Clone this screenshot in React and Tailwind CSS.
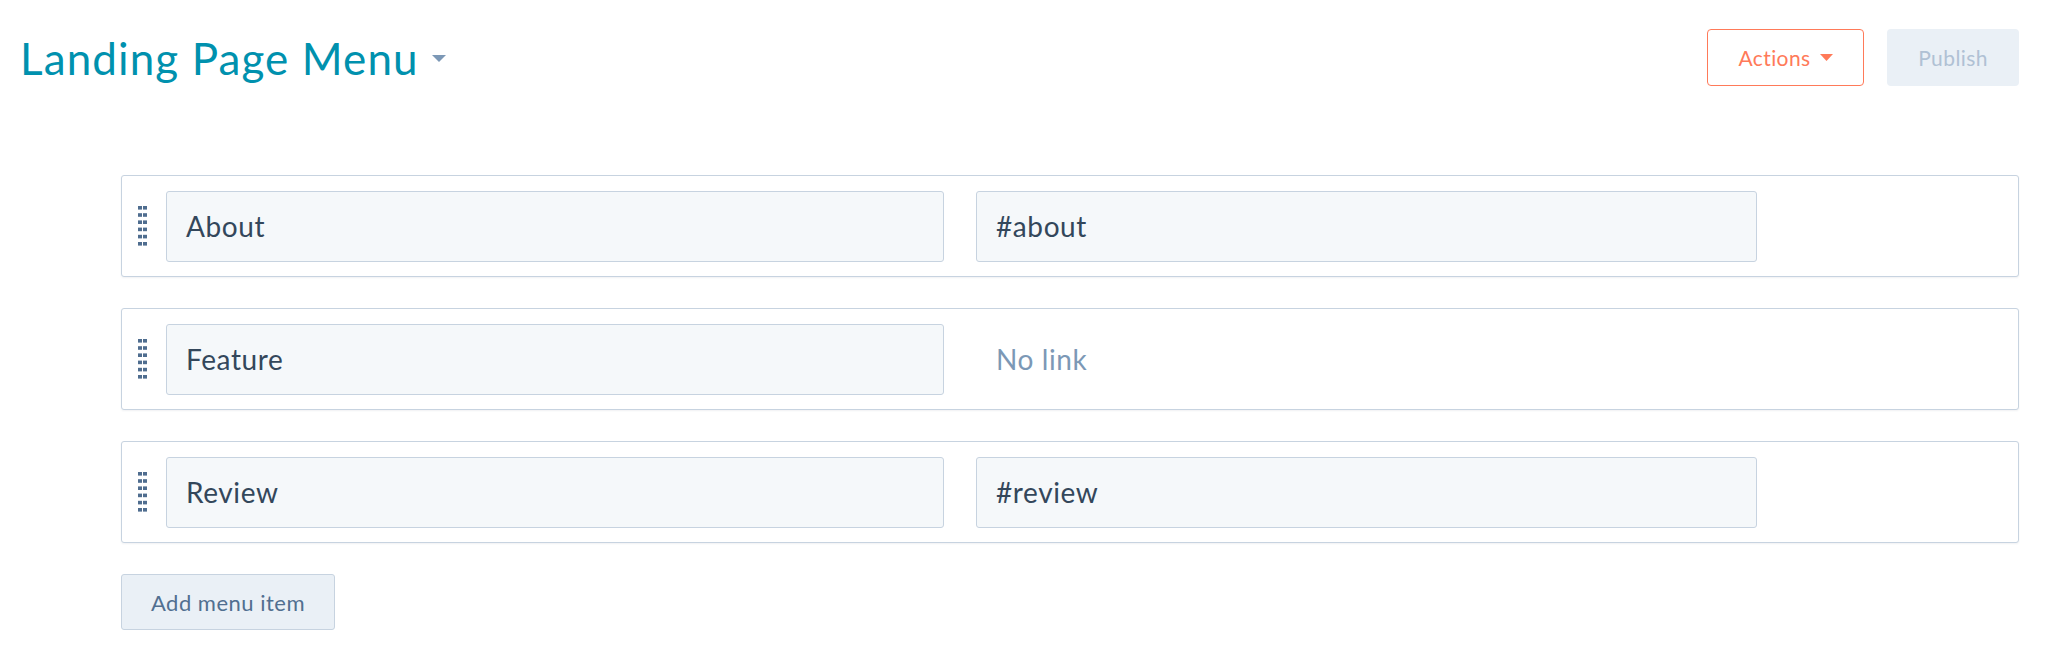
import React from 'react';

const items = [
  { label: 'About', link: '#about' },
  { label: 'Feature', link: null },
  { label: 'Review', link: '#review' },
];

// six rows of paired dots, the drag grip
const DragHandle = () => (
  <svg width="9" height="40" viewBox="0 0 9 40" className="shrink-0">
    {[0, 7.2, 14.4, 21.6, 28.8, 36].map((y) => (
      <g key={y} fill="#4f6d8f">
        <rect x="0" y={y} width="4" height="3.6" />
        <rect x="5" y={y} width="4" height="3.6" />
      </g>
    ))}
  </svg>
);

const Caret = ({ w, h, color }) => (
  <svg width={w} height={h} viewBox={`0 0 ${w} ${h}`}>
    <path d={`M0 0 L${w} 0 L${w / 2} ${h} Z`} fill={color} />
  </svg>
);

const MenuRow = ({ label, link }) => (
  <div className="flex h-[102px] items-center rounded-[3px] border border-[#c7d3e0] bg-white pl-[16px] shadow-[0_1px_2px_rgba(45,62,80,0.07)]">
    <DragHandle />
    <div className="ml-[19px] flex h-[71px] w-[778px] items-center rounded-[3px] border border-[#c7d3e0] bg-[#f5f8fa] px-[19px] text-[28px] tracking-[0.6px] text-[#33475b]">
      {label}
    </div>
    {link ? (
      <div className="ml-[32px] flex h-[71px] w-[781px] items-center rounded-[3px] border border-[#c7d3e0] bg-[#f5f8fa] px-[19px] text-[28px] tracking-[0.6px] text-[#33475b]">
        {link}
      </div>
    ) : (
      <div className="ml-[32px] flex h-[71px] w-[781px] items-center px-[20px] text-[28px] tracking-[0.6px] text-[#7c98b6]">
        No link
      </div>
    )}
  </div>
);

export default function App() {
  return (
    <div className="h-[652px] w-full bg-white pl-[20px] pr-[29px] font-['Lato',sans-serif]">
      <div className="flex h-[57px] translate-y-[29px] items-center justify-between">
        <div className="flex items-center">
          <h1 className="text-[44px] leading-none tracking-[1.1px] text-[#0091ae]">Landing Page Menu</h1>
          <span className="ml-[13px] mt-[2px]">
            <Caret w={14} h={7} color="#7c98b6" />
          </span>
        </div>
        <div className="flex items-center gap-[23px]">
          <button className="flex h-[57px] w-[157px] items-center justify-center gap-[9px] rounded-[4px] border border-[#ff7a59] bg-white text-[21px] tracking-[0.4px] text-[#ff7a59]">
            Actions
            <Caret w={13} h={7} color="#ff7a59" />
          </button>
          <button className="h-[57px] w-[132px] rounded-[4px] bg-[#eaf0f6] text-[21px] tracking-[0.4px] text-[#b0c1d4]">
            Publish
          </button>
        </div>
      </div>

      <div className="ml-[101px] mt-[118px] flex flex-col gap-[31px]">
        {items.map((item) => (
          <MenuRow key={item.label} {...item} />
        ))}
      </div>

      <button className="ml-[101px] mt-[31px] h-[56px] w-[214px] rounded-[3px] border border-[#c7d3e0] bg-[#eaf0f6] text-[22px] tracking-[0.5px] text-[#516f90]">
        Add menu item
      </button>
    </div>
  );
}
